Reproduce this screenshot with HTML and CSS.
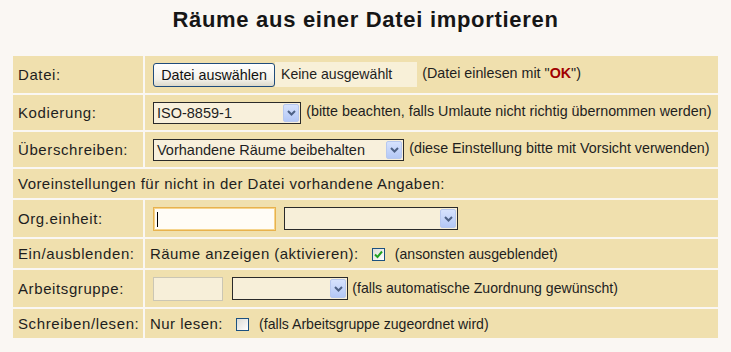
FILE: index.html
```html
<!DOCTYPE html>
<html lang="de">
  <head>
    <meta charset="UTF-8" />
    <title>Räume importieren</title>
    <link rel="stylesheet" href="styles.css">
  </head>
  <body>
    <h1>Räume aus einer Datei importieren</h1>
    <form class="import">
      <table class="grid">
        <colgroup>
          <col class="col-label">
          <col>
        </colgroup>
        <tr class="tall">
          <td class="label">Datei:</td>
          <td class="field">
            <button type="button" class="file-btn">Datei auswählen</button><span class="file-name">Keine ausgewählt</span>
            <span class="hint">(Datei einlesen mit "<b class="ok">OK</b>")</span>
          </td>
        </tr>
        <tr class="mid">
          <td class="label">Kodierung:</td>
          <td class="field">
            <span class="select sel-enc"><span class="sel-text">ISO-8859-1</span><span class="arrow"><svg width="9" height="6" viewBox="0 0 9 6"><path d="M1 1l3.5 3.5L8 1" fill="none" stroke="#4d6185" stroke-width="2"/></svg></span></span>
            <span class="hint">(bitte beachten, falls Umlaute nicht richtig übernommen werden)</span>
          </td>
        </tr>
        <tr class="mid">
          <td class="label">Überschreiben:</td>
          <td class="field">
            <span class="select sel-over"><span class="sel-text">Vorhandene Räume beibehalten</span><span class="arrow"><svg width="9" height="6" viewBox="0 0 9 6"><path d="M1 1l3.5 3.5L8 1" fill="none" stroke="#4d6185" stroke-width="2"/></svg></span></span>
            <span class="hint">(diese Einstellung bitte mit Vorsicht verwenden)</span>
          </td>
        </tr>
        <tr class="short">
          <td class="label wide" colspan="2">Voreinstellungen für nicht in der Datei vorhandene Angaben:</td>
        </tr>
        <tr class="tall">
          <td class="label">Org.einheit:</td>
          <td class="field">
            <span class="text-in focused"><span class="caret"></span></span>
            <span class="select sel-org"><span class="sel-text"></span><span class="arrow"><svg width="9" height="6" viewBox="0 0 9 6"><path d="M1 1l3.5 3.5L8 1" fill="none" stroke="#4d6185" stroke-width="2"/></svg></span></span>
          </td>
        </tr>
        <tr class="short">
          <td class="label">Ein/ausblenden:</td>
          <td class="field plain">
            Räume anzeigen (aktivieren):
            <span class="check"><svg width="9" height="9" viewBox="0 0 9 9"><path d="M1 4.5l2.5 2.5L8 1.5" fill="none" stroke="#21a121" stroke-width="2"/></svg></span>
            <span class="small">(ansonsten ausgeblendet)</span>
          </td>
        </tr>
        <tr class="tall">
          <td class="label">Arbeitsgruppe:</td>
          <td class="field">
            <span class="text-in disabled"></span>
            <span class="select sel-group"><span class="sel-text"></span><span class="arrow"><svg width="9" height="6" viewBox="0 0 9 6"><path d="M1 1l3.5 3.5L8 1" fill="none" stroke="#4d6185" stroke-width="2"/></svg></span></span>
            <span class="small">(falls automatische Zuordnung gewünscht)</span>
          </td>
        </tr>
        <tr class="short">
          <td class="label">Schreiben/lesen:</td>
          <td class="field plain">
            Nur lesen:
            <span class="check"></span>
            <span class="small">(falls Arbeitsgruppe zugeordnet wird)</span>
          </td>
        </tr>
      </table>
    </form>
  </body>
</html>
```

FILE: styles.css
```css
body {
  font-family: "Liberation Sans", Arial, sans-serif;
  margin: 0;
  padding: 0 11px;
  background-color: #faf7f3;
  color: #1e1e1e;
}
h1 {
  font-size: 22px;
  line-height: 24px;
  letter-spacing: 0.7px;
  margin: 8px 0 22px;
  text-align: center;
  color: #161616;
}
.grid {
  width: 100%;
  table-layout: fixed;
  border-collapse: separate;
  border-spacing: 2px;
  font-size: 15px;
}
.col-label {
  width: 130px;
}
.grid td {
  background-color: #f0e0ae;
  padding: 0 4px;
  vertical-align: middle;
  white-space: nowrap;
}
.grid td.label {
  letter-spacing: 0.6px;
  padding-left: 5px;
}
.grid td.wide {
  letter-spacing: 0.45px;
}
.grid td.field {
  padding-left: 8px;
}
.grid td.plain {
  padding-left: 5px;
  letter-spacing: 0.45px;
}
tr.tall td {
  height: 37px;
}
tr.mid td {
  height: 35px;
}
tr.short td {
  height: 29px;
}

.file-btn {
  font: inherit;
  font-size: 14.3px;
  height: 24px;
  width: 122px;
  padding: 0;
  border: 1px solid #1f4c7c;
  border-radius: 3px;
  background: linear-gradient(#ffffff, #f2f1ea 70%, #dcd9cb);
  color: #111;
  vertical-align: middle;
  margin: 0;
}
.file-name {
  display: inline-block;
  vertical-align: middle;
  background-color: #f8f0d8;
  width: 136px;
  height: 25px;
  line-height: 25px;
  padding-left: 6px;
  font-size: 14.1px;
}
.hint {
  font-size: 14.3px;
  margin-left: 1px;
}
.ok {
  color: #a00000;
}

.select {
  display: inline-flex;
  vertical-align: middle;
  border: 1px solid #2a2a2a;
  background-color: #f8f0dc;
  box-sizing: border-box;
  height: 22px;
  font-size: 14.5px;
}
.sel-text {
  flex: 1;
  padding-left: 3px;
  line-height: 20px;
}
.arrow {
  width: 16px;
  margin: 1px;
  background: linear-gradient(#d6e2fd, #b4c8f6);
  border: 1px solid #b7c8ef;
  border-radius: 2px;
  box-sizing: border-box;
  display: flex;
  align-items: center;
  justify-content: center;
}
.sel-enc {
  width: 148px;
}
.sel-over {
  width: 251px;
}
.sel-org {
  width: 174px;
  height: 23px;
  margin-left: 4px;
  background-color: #f7efd9;
}
.sel-group {
  width: 116px;
  height: 23px;
  margin-left: 5px;
  background-color: #f7efd9;
}

.text-in {
  display: inline-block;
  vertical-align: middle;
  box-sizing: border-box;
  height: 24px;
  position: relative;
}
.text-in.focused {
  width: 123px;
  border: 1px solid #e8b24e;
  box-shadow: inset 0 0 0 1px #f6d48c;
  background-color: #fffcf6;
}
.caret {
  position: absolute;
  left: 3px;
  top: 4px;
  width: 1px;
  height: 15px;
  background-color: #000;
}
.text-in.disabled {
  width: 70px;
  border: 1px solid #cbc6b4;
  background-color: #f7efd9;
}

.check {
  display: inline-flex;
  align-items: center;
  justify-content: center;
  vertical-align: middle;
  width: 13px;
  height: 13px;
  box-sizing: border-box;
  border: 1px solid #1c5180;
  background: linear-gradient(135deg, #dcdcd6, #ffffff);
  margin: 0 5px 0 9px;
  position: relative;
  top: -1px;
}
.small {
  font-size: 14.1px;
  letter-spacing: 0;
}
```
